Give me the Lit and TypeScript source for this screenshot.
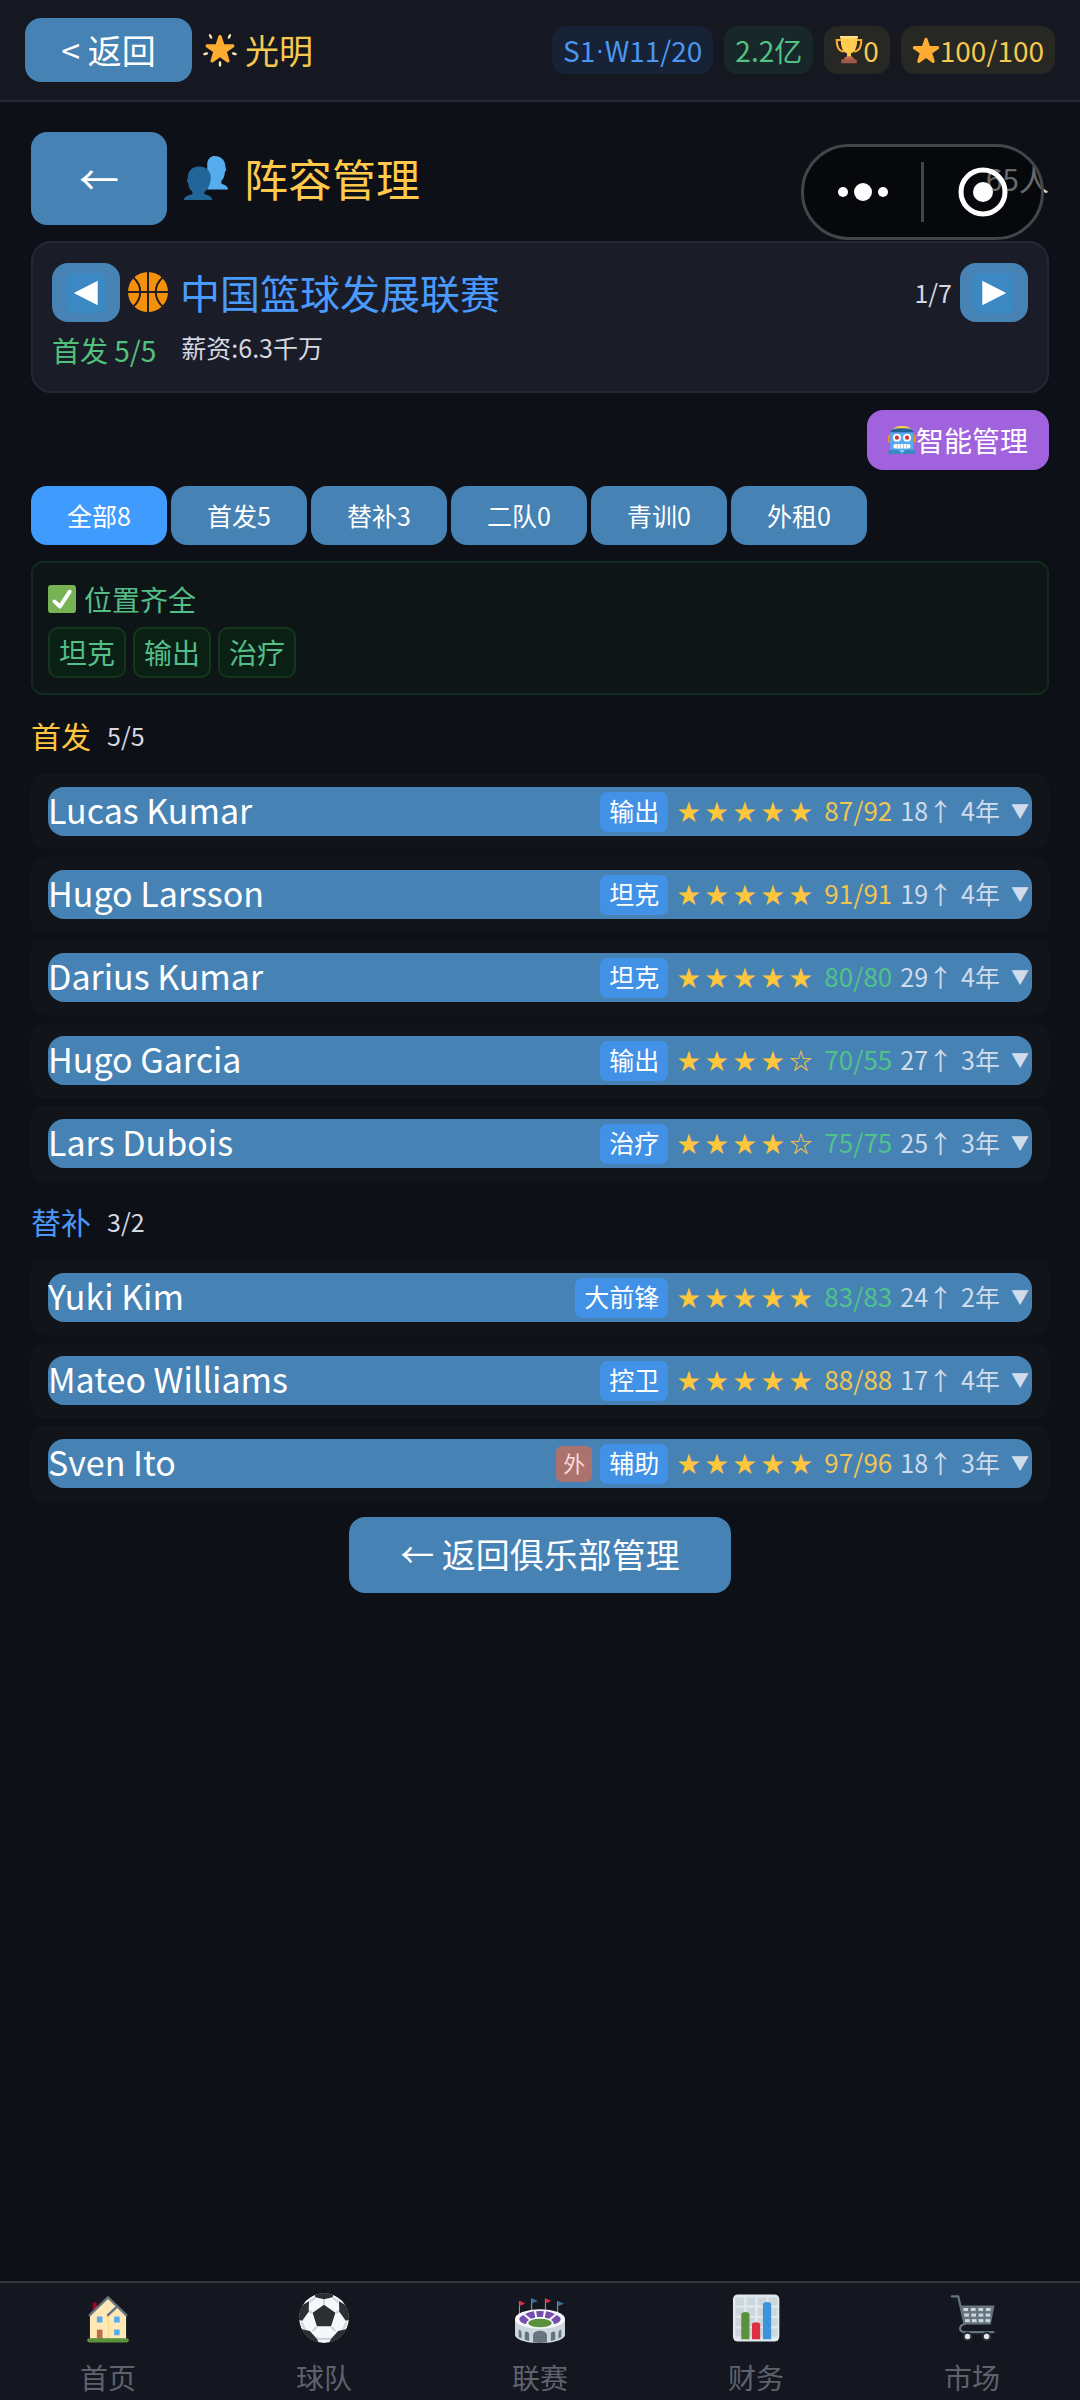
import { LitElement, html, css, svg, nothing } from "lit";
import { customElement, property, state } from "lit/decorators.js";

const STAR_PATH =
  "M27.287 34.627c-.404 0-.806-.124-1.152-.371L18 28.422l-8.135 5.834c-.343.247-.743.371-1.147.371-.405 0-.81-.127-1.155-.379-.69-.504-.981-1.394-.721-2.206l3.034-9.792-8.062-5.681c-.685-.505-.97-1.396-.708-2.207.264-.809 1.016-1.357 1.866-1.363L12.947 13l3.179-9.549c.268-.809 1.023-1.353 1.874-1.353.851 0 1.606.545 1.875 1.353L23 13l10.036-.001c.853.006 1.606.556 1.868 1.363.263.811-.022 1.702-.708 2.207l-8.062 5.681 3.034 9.792c.26.812-.033 1.702-.721 2.206-.345.252-.751.379-1.16.379z";

const columns = [0, 1, 2, 3];
const rows = [0, 1, 2];

const ICONS: Record<string, unknown> = {
  glow: svg`
    <g fill="#FFE8B6">
      <ellipse cx="8" cy="3.6" rx="1.3" ry="2.8" transform="rotate(-28 8 3.6)"/>
      <ellipse cx="28" cy="3.6" rx="1.3" ry="2.8" transform="rotate(28 28 3.6)"/>
      <ellipse cx="2.8" cy="22" rx="2.8" ry="1.3" transform="rotate(-18 2.8 22)"/>
      <ellipse cx="33.2" cy="22" rx="2.8" ry="1.3" transform="rotate(18 33.2 22)"/>
      <ellipse cx="18" cy="32.8" rx="1.4" ry="3.2"/>
    </g>
    <path fill="#FFAC33" transform="translate(1.8 .2) scale(.9)" d=${STAR_PATH}/>`,
  star: svg`<path fill="#FFAC33" d=${STAR_PATH}/>`,
  trophy: svg`
    <path fill="none" stroke="#FFAC33" stroke-width="2.6" d="M9 5H2.2c0 8 2.6 14.500 9.300 14.800M27 5h6.800c0 8-2.600 14.500-9.300 14.800"/>
    <path fill="#FFCC4D" d="M7.500 1h21v4c0 9-2.500 15.500-8 17.300V28h-5v-5.700C10 20.500 7.500 14 7.500 5z"/>
    <path fill="#FFE08A" d="M6.500 0h23v3h-23z"/>
    <path fill="#C1694F" d="M12 28.500c0-1.500 2-2.500 6-2.500s6 1 6 2.500V31H12z"/>
    <path fill="#A0584A" d="M8 31.500c0-1 .8-1.500 2-1.500h16c1.200 0 2 .5 2 1.500V35H8z"/>`,
  busts: svg`
    <path fill="#55ACEE" d="M25 0c5.500 0 8.800 3.800 8.800 8.200 0 1.600.9 2.700.7 3.500-.2.600-.9.600-1 1.100-.3 3.500-1.200 6-2.900 7.500v2.400c3.200 1 5.400 2.300 5.400 4.800H19V5.500C20 2 22 0 25 0z"/>
    <path fill="#226699" d="M12.500 8.500c-5.600 0-9.400 3.800-9.400 8.700 0 1.500-.9 2.700-.7 3.500.1.700.9.700 1 1.300.3 3.500 1.700 5.800 3.500 7.300v1.900C3.300 32 0 33 0 36h23c0-3-2.700-4-6.300-4.800v-1.900c3-2.300 5.200-6.300 5.200-12.100 0-4.900-3.800-8.700-9.400-8.700z"/>`,
  prev: svg`
    <rect width="36" height="36" rx="4" fill="#3B88C3"/>
    <path fill="#fff" d="M7 18 28.500 7v22z"/>`,
  next: svg`
    <rect width="36" height="36" rx="4" fill="#3B88C3"/>
    <path fill="#fff" d="M29 18 7.500 7v22z"/>`,
  basketball: svg`
    <circle cx="18" cy="18" r="18" fill="#F4900C"/>
    <path fill="none" stroke="#231F20" stroke-width="1.800" d="M18 0v36M0 18h36M5 5.200c8 7 8 18.600 0 25.600M31 5.200c-8 7-8 18.600 0 25.600"/>`,
  robot: svg`
    <path fill="#F4900C" d="M0 14c0-2 1-3 2.500-3v11C1 22 0 20 0 18zM36 14c0-2-1-3-2.500-3v11c1.500 0 2.500-2 2.500-4z"/>
    <path fill="#FFCC4D" d="M5 6C8 1.500 12 0 18 0s10 1.500 13 6z"/>
    <path fill="#55ACEE" d="M3 8h30v24H3z"/>
    <path fill="#226699" d="M3 8c1-3.500 5-5 15-5s14 1.500 15 5H3z"/>
    <path fill="#3B88C3" d="M0 36c0-4 2-5.500 5-5.500h26c3 0 5 1.500 5 5.500z"/>
    <path fill="#8CCAF7" d="M14 31h8l-4 4z"/>
    <circle cx="11.500" cy="15" r="5" fill="#fff"/><circle cx="24.500" cy="15" r="5" fill="#fff"/>
    <circle cx="11.500" cy="15" r="2.700" fill="#C9313D"/><circle cx="24.500" cy="15" r="2.700" fill="#C9313D"/>
    <rect x="7" y="23" width="22" height="6" rx="3" fill="#fff"/>
    <path stroke="#9FB4C4" stroke-width="1" d="M12 23v6M16 23v6M20 23v6M24 23v6"/>`,
  check: svg`
    <rect width="36" height="36" rx="4" fill="#77B255"/>
    <path fill="#fff" d="M29.280 6.362c-1.156-.751-2.704-.422-3.458.736L14.936 23.877l-5.029-4.650c-1.014-.938-2.596-.875-3.533.138-.937 1.014-.875 2.596.139 3.533l7.209 6.666c.480.445 1.090.665 1.696.665.673 0 1.534-.282 2.099-1.139.332-.506 12.500-19.270 12.500-19.270.751-1.159.421-2.707-.737-3.458z"/>`,
  house: svg`
    <path fill="#A0041E" d="M7 7.500c0-1.200 3-1.200 3 0V14H7z"/>
    <path fill="#FFE8B6" d="M5 15.500 18 3l13 12.500V33H5z"/>
    <path fill="#FFD983" d="M18 16h1v17h-1z"/>
    <path fill="#FFE8B6" d="m19 15.500 5-4.500 7 5v17H19z"/>
    <path fill="none" stroke="#66757F" stroke-width="1.700" stroke-linecap="round" stroke-linejoin="round" d="M4.800 16 18 3.200 31.200 16M18 16l5.700-5.500"/>
    <path fill="#55ACEE" d="M10 17h4v4.200h-4zM22.400 17h4v4.200h-4zM22.400 26.200h4v4.200h-4z"/>
    <path fill="#C1694F" d="M10 26.400h4V33h-4z"/>
    <rect x="3" y="32.600" width="30" height="3" rx="1.500" fill="#5C913B"/>`,
  soccer: svg`
    <clipPath id="ball"><circle cx="18" cy="18" r="18"/></clipPath>
    <g clip-path="url(#ball)">
      <circle cx="18" cy="18" r="18" fill="#F5F8FA"/>
      <path fill="none" stroke="#CCD6DD" stroke-width="1.500" d="M18 8.500V4M26.500 14.200l3-1.500M23.200 24.300l3 3.200M12.800 24.300l-3 3.200M9.500 14.200l-3-1.500M11.500 3.500 7 7M24.500 3.500 29 7M1.800 21l2.700 6M34.200 21l-2.700 6M13 33h10"/>
      <path fill="#292F33" d="m18 8.400 8.200 5.800L23.100 24H12.900L9.800 14.200zM11 0h14l-.7 3-6.300 1.500L11.700 3zM28.800 6l7.200 4v9.500l-2.300.5-4.700-6.500zM7.200 6 0 10v9.500l2.300.5L7 13.500zM34.500 26l-6.300 1.300-5.200 5.900-2 4.300L30 36zM1.500 26l6.300 1.300 5.200 5.900 2 4.300L6 36z"/>
    </g>`,
  stadium: svg`
    <path stroke="#99AAB5" stroke-width=".700" d="M3.200 6v10M12 4v10M21.900 4v10M30.700 6v10"/>
    <path fill="#DD2E44" d="m3.200 5.500 4.200 2-4.200 1.800zM21.900 3.800l4.200 2-4.200 1.800z"/>
    <path fill="#3B6E99" d="m12 3.800 4.500 2L12 7.600zM30.700 5.800l4.600 2-4.600 1.800z"/>
    <path fill="#CCD6DD" d="M0 18.700V30c0 3.500 8 6 18 6s18-2.500 18-6V18.700z"/>
    <path fill="#66757F" d="M2.700 26.500c1.600-.500 2 1.500 2 3v3.200L2.700 31.700zM7 29c0-2 3-1.500 3.200.5v5L7 33.700zM33.300 26.500c-1.600-.500-2 1.500-2 3v3.200l2-1zM29 29c0-2-3-1.500-3.200.5v5l3.200-.8zM13 30.500c0-4.500 10-4.500 10 0v5.200c-3 .4-7 .4-10 0z"/>
    <ellipse cx="18" cy="18.700" rx="18" ry="7" fill="#F5F8FA"/>
    <path fill="#744EAA" d="M15.200 13.100q2.800-.3 5.600 0l-.7 4.200h-4.200zM7.200 15.100q3-1.500 6.400-1.900l1 4.400-3.100 1zM28.800 15.100q-3-1.500-6.400-1.900l-1 4.400 3.100 1zM6 15.900l4 3.600c-1.300.8-2 1.800-2 3-2.500-.7-4.600-1.900-4.900-3.500 0-1.200 1.100-2.200 2.900-3.100zM30 15.900l-4 3.600c1.300.8 2 1.800 2 3 2.500-.7 4.600-1.900 4.900-3.500 0-1.200-1.100-2.200-2.900-3.100z"/>
    <ellipse cx="18" cy="21.600" rx="8.500" ry="3.100" fill="#5C913B"/>`,
  chart: svg`
    <rect x="1.400" y="1" width="33.400" height="34" rx="3.500" fill="#E1E8ED"/>
    <g fill="#CCD6DD">${[3.2, 10.6, 18, 25.600].map((y) =>
      columns.map((c) => svg`<rect x=${3.2 + c * 8} y=${y} width="6.200" height="5.800"/>`)
    )}</g>
    <path fill="#5C913B" d="M7.400 15.200c0-2 5.900-2 5.900 0v18.100H7.400z"/>
    <path fill="#DD2E44" d="M15.100 22.500c0-2 5.900-2 5.900 0v10.800h-5.900z"/>
    <path fill="#3B94D9" d="M23 8c0-2 5.900-2 5.900 0v25.300H23z"/>`,
  cart: svg`
    <path fill="none" stroke="#66757F" stroke-width="1.600" stroke-linecap="round" stroke-linejoin="round" d="M3.500 2.500h4.600l4.600 20c-4 .500-4.500 5.500-.5 5.600h21.300"/>
    <path fill="#66757F" d="M10 9h24.200l-2.700 13.700H12.700z"/>
    <g fill="#CCD6DD">${rows.map((r) =>
      columns.map(
        (c) => svg`<rect x=${11.8 + r * 0.6 + c * (5.4 - r * 0.25)} y=${10.800 + r * 4} width="3.400" height="2.200"/>`
      )
    )}</g>
    <g fill="#E1E8ED" stroke="#292F33" stroke-width="1.500"><circle cx="14.800" cy="31.300" r="2.700"/><circle cx="28.500" cy="31.300" r="2.700"/></g>`,
};

@customElement("emoji-icon")
export class EmojiIcon extends LitElement {
  @property() name = "star";

  static styles = css`
    :host {
      display: inline-block;
      flex: none;
      width: 1em;
      height: 1em;
    }
    .glyph {
      display: block;
      width: 100%;
      height: 100%;
    }
  `;

  render() {
    return html`<svg class="glyph" viewBox="0 0 36 36" aria-hidden="true">${ICONS[this.name]}</svg>`;
  }
}

interface Player {
  name: string;
  position: string;
  stars: number;
  current: number;
  potential: number;
  age: number;
  years: number;
  tier: "gold" | "green";
  foreign?: boolean;
}

const STARTERS: Player[] = [
  { name: "Lucas Kumar", position: "输出", stars: 5, current: 87, potential: 92, age: 18, years: 4, tier: "gold" },
  { name: "Hugo Larsson", position: "坦克", stars: 5, current: 91, potential: 91, age: 19, years: 4, tier: "gold" },
  { name: "Darius Kumar", position: "坦克", stars: 5, current: 80, potential: 80, age: 29, years: 4, tier: "green" },
  { name: "Hugo Garcia", position: "输出", stars: 4, current: 70, potential: 55, age: 27, years: 3, tier: "green" },
  { name: "Lars Dubois", position: "治疗", stars: 4, current: 75, potential: 75, age: 25, years: 3, tier: "green" },
];

const BENCH: Player[] = [
  { name: "Yuki Kim", position: "大前锋", stars: 5, current: 83, potential: 83, age: 24, years: 2, tier: "green" },
  { name: "Mateo Williams", position: "控卫", stars: 5, current: 88, potential: 88, age: 17, years: 4, tier: "gold" },
  { name: "Sven Ito", position: "辅助", stars: 5, current: 97, potential: 96, age: 18, years: 3, tier: "gold", foreign: true },
];

@customElement("player-row")
export class PlayerRow extends LitElement {
  @property({ attribute: false }) player!: Player;

  static styles = css`
    :host {
      display: block;
      padding: 13px 17px;
      border-radius: 12px;
      background: #111419;
    }
    .bar {
      display: flex;
      align-items: center;
      gap: 8px;
      width: 100%;
      height: 49px;
      padding: 0;
      border: 0;
      border-radius: 16px;
      background: #4682b4;
      color: #d0dcec;
      font-family: inherit;
      font-size: 25px;
      line-height: 36px;
      text-align: left;
      white-space: nowrap;
    }
    .bar > span {
      padding-bottom: 4px;
    }
    .name {
      flex: 1;
      color: #fff;
      font-size: 34px;
    }
    .bar > .tag {
      padding: 0 9px 4px;
      border-radius: 7px;
      background: #4192e6;
      color: #fff;
    }
    .bar > .foreign {
      padding: 0 7px 4px;
      border-radius: 6px;
      background: #ac736e;
      color: #f8dcda;
      font-size: 22px;
      line-height: 32px;
    }
    .stars {
      display: flex;
      gap: 5px;
      padding: 0 4px 0 1px;
      color: #ffc53d;
      font-size: 23px;
    }
    .rating {
      font-size: 26px;
    }
    .gold {
      color: #f0c550;
    }
    .green {
      color: #50c388;
    }
    .caret {
      width: 24px;
      font-size: 18px;
      text-align: center;
    }
  `;

  render() {
    const p = this.player;
    return html`
      <button class="bar" type="button">
        <span class="name">${p.name}</span>
        ${p.foreign ? html`<span class="foreign">外</span>` : nothing}
        <span class="tag">${p.position}</span>
        <span class="stars">${[1, 2, 3, 4, 5].map((n) => html`<span>${n <= p.stars ? "★" : "☆"}</span>`)}</span>
        <span class="rating ${p.tier}">${p.current}/${p.potential}</span>
        <span>${p.age}↑</span>
        <span>${p.years}年</span>
        <span class="caret">▼</span>
      </button>
    `;
  }
}

@customElement("app-root")
export class AppRoot extends LitElement {
  @state() private filter = 0;

  private filters = ["全部8", "首发5", "替补3", "二队0", "青训0", "外租0"];
  private links = [
    ["house", "首页"],
    ["soccer", "球队"],
    ["stadium", "联赛"],
    ["chart", "财务"],
    ["cart", "市场"],
  ];

  static styles = css`
    :host {
      display: flex;
      flex-direction: column;
      position: relative;
      min-height: 100vh;
      background: #0d1017;
      color: #d5d8e0;
      font-family: "Noto Sans CJK SC", sans-serif;
      font-size: 28px;
      line-height: 40px;
      white-space: nowrap;
    }
    button {
      box-sizing: border-box;
      padding: 0 0 2px;
      border: 0;
      border-radius: 16px;
      background: #4682b4;
      color: #fff;
      font: inherit;
    }
    h1,
    h2 {
      margin: 0;
      font-weight: 400;
    }
    .topbar {
      display: flex;
      align-items: center;
      height: 100px;
      padding: 0 25px;
      border-bottom: 2px solid #262933;
      background: #151821;
    }
    .back {
      width: 167px;
      height: 64px;
      padding: 0;
      font-size: 34px;
    }
    .club {
      display: flex;
      flex: 1;
      align-items: center;
      gap: 8px;
      padding-left: 11px;
      color: #f5c950;
      font-size: 34px;
    }
    .badges {
      display: flex;
      gap: 11px;
    }
    .badge {
      display: flex;
      align-items: center;
      height: 48px;
      padding: 0 11px;
      border-radius: 14px;
    }
    .season {
      background: #172236;
      color: #4a97f0;
    }
    .dot {
      font-family: "Liberation Sans", sans-serif;
    }
    .money {
      background: #18272a;
      color: #54c183;
    }
    .honor {
      background: #272723;
      color: #f5c950;
    }
    .content {
      display: flex;
      flex: 1;
      flex-direction: column;
      padding: 30px 31px;
    }
    .heading {
      display: flex;
      align-items: center;
      height: 93px;
      margin-bottom: 16px;
    }
    .arrow {
      width: 136px;
      height: 93px;
      font-size: 40px;
    }
    .title {
      display: flex;
      flex: 1;
      align-items: center;
      gap: 16px;
      padding: 0 0 2px 17px;
      color: #ffca4b;
      font-size: 44px;
    }
    .total {
      padding-bottom: 2px;
      color: #d0d2d6;
      font-size: 30px;
    }
    .capsule {
      display: flex;
      position: absolute;
      top: 144px;
      right: 36px;
      box-sizing: border-box;
      width: 243px;
      height: 96px;
      border: 3px solid #434549;
      border-radius: 48px;
      background: rgba(0, 0, 0, 0.5);
    }
    .capsule-button {
      display: grid;
      flex: 1;
      place-items: center;
      padding: 0;
      background: none;
    }
    .divider {
      align-self: center;
      width: 3px;
      height: 60px;
      background: #434549;
    }
    .league {
      box-sizing: border-box;
      height: 152px;
      padding: 20px 19px;
      border: 2px solid #242735;
      border-radius: 20px;
      background: #1a1d28;
    }
    .league-row {
      display: flex;
      align-items: center;
      gap: 8px;
    }
    .pager {
      display: grid;
      place-items: center;
      width: 68px;
      height: 59px;
      padding: 0;
      font-size: 40px;
    }
    .league-name {
      display: flex;
      flex: 1;
      align-items: center;
      gap: 12px;
      padding-bottom: 2px;
      color: #4a9bff;
      font-size: 40px;
    }
    .small {
      padding-bottom: 2px;
      font-size: 25px;
    }
    .league-info {
      display: flex;
      gap: 25px;
      padding-top: 7px;
      line-height: 42px;
    }
    .league-info .small {
      line-height: 36px;
    }
    .ok {
      color: #52c17c;
    }
    .smart {
      display: flex;
      align-items: center;
      align-self: flex-end;
      height: 60px;
      margin: 17px 0 16px;
      padding: 0 21px;
      background: #a162de;
    }
    .filters {
      display: flex;
      gap: 4px;
      margin-bottom: 16px;
    }
    .filter {
      width: 136px;
      height: 59px;
      font-size: 25px;
    }
    .filter.active {
      background: #409bff;
    }
    .coverage {
      display: flex;
      flex-direction: column;
      gap: 8px;
      padding: 16px 15px 15px;
      border: 2px solid #12291c;
      border-radius: 12px;
      background: #0e1517;
      color: #55bd88;
    }
    .coverage-title {
      display: flex;
      align-items: center;
      gap: 8px;
    }
    .chips {
      display: flex;
      gap: 7px;
    }
    .chip {
      padding: 3px 9px 4px;
      border: 2px solid #14361d;
      border-radius: 10px;
      background: #0a2014;
    }
    .section {
      display: flex;
      align-items: center;
      gap: 16px;
      padding: 20px 0 19px;
    }
    .section-name {
      font-size: 30px;
    }
    .section .small {
      padding: 0;
    }
    .gold {
      color: #ffc53d;
    }
    .blue {
      color: #4a97f5;
    }
    .players {
      display: flex;
      flex-direction: column;
      gap: 8px;
    }
    .return {
      align-self: center;
      height: 76px;
      margin-top: 16px;
      padding: 0 51px 2px;
      font-size: 34px;
    }
    .tabbar {
      display: flex;
      height: 117px;
      border-top: 2px solid #343740;
      background: #14171f;
    }
    .tab {
      display: flex;
      flex: 1;
      flex-direction: column;
      align-items: center;
      gap: 14px;
      padding-top: 10px;
      color: #5f626c;
      line-height: 40px;
      text-decoration: none;
    }
    .tab-icon {
      font-size: 50px;
    }
  `;

  private section(title: string, tone: string, count: string, players: Player[]) {
    return html`
      <section>
        <header class="section">
          <h2 class="section-name ${tone}">${title}</h2>
          <span class="small">${count}</span>
        </header>
        <div class="players">${players.map((p) => html`<player-row .player=${p}></player-row>`)}</div>
      </section>
    `;
  }

  render() {
    return html`
      <header class="topbar">
        <button class="back" type="button">&lt; 返回</button>
        <div class="club"><emoji-icon name="glow"></emoji-icon>光明</div>
        <div class="badges">
          <span class="badge season">S1<span class="dot">·</span>W11/20</span>
          <span class="badge money">2.2亿</span>
          <span class="badge honor"><emoji-icon name="trophy"></emoji-icon>0</span>
          <span class="badge honor"><emoji-icon name="star"></emoji-icon>100/100</span>
        </div>
      </header>

      <main class="content">
        <div class="heading">
          <button class="arrow" type="button" aria-label="返回">←</button>
          <h1 class="title"><emoji-icon name="busts"></emoji-icon>阵容管理</h1>
          <span class="total">65人</span>
        </div>

        <section class="league">
          <div class="league-row">
            <button class="pager" type="button" aria-label="上一个"><emoji-icon name="prev"></emoji-icon></button>
            <h2 class="league-name"><emoji-icon name="basketball"></emoji-icon>中国篮球发展联赛</h2>
            <span class="small">1/7</span>
            <button class="pager" type="button" aria-label="下一个"><emoji-icon name="next"></emoji-icon></button>
          </div>
          <div class="league-info">
            <span class="ok">首发 5/5</span>
            <span class="small">薪资:6.3千万</span>
          </div>
        </section>

        <button class="smart" type="button"><emoji-icon name="robot"></emoji-icon>智能管理</button>

        <div class="filters">
          ${this.filters.map(
            (label, i) => html`<button
              class="filter ${i === this.filter ? "active" : ""}"
              type="button"
              aria-pressed=${i === this.filter}
              @click=${() => (this.filter = i)}
            >${label}</button>`
          )}
        </div>

        <section class="coverage">
          <div class="coverage-title"><emoji-icon name="check"></emoji-icon>位置齐全</div>
          <div class="chips">${["坦克", "输出", "治疗"].map((c) => html`<span class="chip">${c}</span>`)}</div>
        </section>

        ${this.section("首发", "gold", "5/5", STARTERS)} ${this.section("替补", "blue", "3/2", BENCH)}

        <button class="return" type="button">← 返回俱乐部管理</button>
      </main>

      <nav class="tabbar">
        ${this.links.map(
          ([icon, label]) => html`<a class="tab" href="#${icon}"
            ><emoji-icon class="tab-icon" name=${icon}></emoji-icon><span>${label}</span></a
          >`
        )}
      </nav>

      <div class="capsule">
        <button class="capsule-button" type="button" aria-label="更多">
          <svg width="54" height="20" viewBox="0 0 54 20" fill="#fff">
            <circle cx="7" cy="10" r="5" /><circle cx="27" cy="10" r="9" /><circle cx="47" cy="10" r="5" />
          </svg>
        </button>
        <span class="divider"></span>
        <button class="capsule-button" type="button" aria-label="关闭">
          <svg width="50" height="50" viewBox="0 0 50 50">
            <circle cx="25" cy="25" r="22" fill="none" stroke="#fff" stroke-width="5" />
            <circle cx="25" cy="25" r="10" fill="#fff" />
          </svg>
        </button>
      </div>
    `;
  }
}
